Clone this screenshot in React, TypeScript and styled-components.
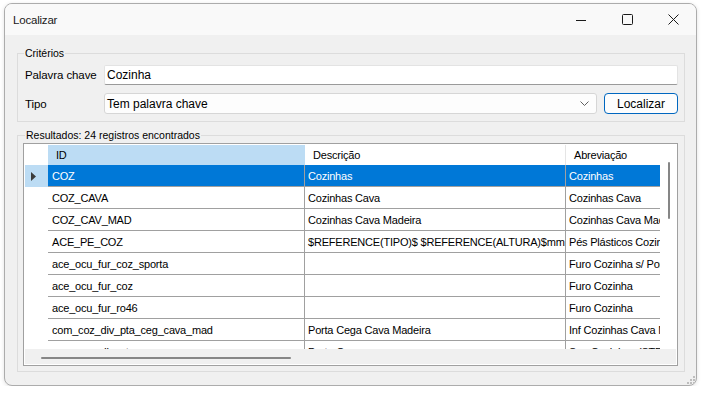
import React from "react";
import styled, { createGlobalStyle } from "styled-components";

const GlobalStyle = createGlobalStyle`
  body {
    margin: 0;
    background: #ffffff;
    font-family: "Liberation Sans", Arial, sans-serif;
  }
`;

const Window = styled.div`
  box-sizing: border-box;
  position: relative;
  width: 693px;
  height: 383px;
  margin: 3px 0 0 4px;
  display: flex;
  flex-direction: column;
  background: #f0f0f0;
  border: 1px solid #acacac;
  border-radius: 8px;
  overflow: hidden;
  box-shadow: 0 1px 4px rgba(0, 0, 0, 0.12);
`;

const TitleBar = styled.div`
  flex: none;
  height: 31px;
  display: flex;
  align-items: center;
  background: #f9f9f9;
`;

const Title = styled.span`
  flex: 1;
  padding-left: 8px;
  font-size: 11.5px;
  letter-spacing: -0.2px;
  color: #1a1a1a;
`;

const CaptionButton = styled.div`
  width: 46px;
  height: 31px;
  display: flex;
  align-items: center;
  justify-content: center;
`;

const Body = styled.div`
  flex: 1;
  min-height: 0;
  display: flex;
  flex-direction: column;
  gap: 6px;
  padding: 11px 11px 13px 12px;
`;

const Group = styled.fieldset<{ $pad: string; $grow?: boolean }>`
  margin: 0;
  min-width: 0;
  min-height: 0;
  padding: ${(p) => p.$pad};
  border: 1px solid #dcdcdc;
  flex: ${(p) => (p.$grow ? "1" : "none")};
  display: flex;
  flex-direction: column;
`;

const Legend = styled.legend<{ $shift: number }>`
  padding: 0 1px;
  margin-left: ${(p) => p.$shift}px;
  font-size: 10.5px;
  line-height: 14px;
  color: #000;
`;

const Form = styled.div`
  display: grid;
  grid-template-columns: 79px 1fr 81px;
  row-gap: 8px;
  align-items: center;
`;

const Label = styled.span`
  font-size: 11.5px;
  letter-spacing: -0.1px;
  color: #000;
`;

const TextBox = styled.div`
  grid-column: 2 / 4;
  box-sizing: border-box;
  height: 20px;
  display: flex;
  align-items: center;
  padding-left: 2px;
  background: #ffffff;
  border: 1px solid #e3e3e3;
  border-bottom-color: #9a9a9a;
  border-radius: 2px;
  font-size: 12px;
`;

const Combo = styled.div`
  box-sizing: border-box;
  height: 21px;
  display: flex;
  align-items: center;
  justify-content: space-between;
  padding: 0 7px 0 2px;
  background: #fdfdfd;
  border: 1px solid #d6d6d6;
  border-radius: 3px;
  font-size: 12px;
`;

const Button = styled.div`
  box-sizing: border-box;
  margin-left: 7px;
  height: 21px;
  display: flex;
  align-items: center;
  justify-content: center;
  background: #fdfdfd;
  border: 1px solid #0067c0;
  border-radius: 4px;
  font-size: 12px;
  color: #000;
`;

const Frame = styled.div`
  flex: 1;
  min-height: 0;
  display: grid;
  grid-template-columns: 1fr 16px;
  grid-template-rows: 1fr 15px;
  padding: 1px;
  background: #ffffff;
  border: 1px solid #a0a0a0;
`;

const Viewport = styled.div`
  overflow: hidden;
  min-width: 0;
`;

const VScroll = styled.div`
  background: #ffffff;
  padding: 17px 0 0 8px;
`;

const VThumb = styled.div`
  width: 2px;
  height: 57px;
  border-radius: 1px;
  background: #868686;
`;

const HScroll = styled.div`
  grid-column: 1 / 3;
  background: #f0f0f0;
  padding: 8px 0 0 16px;
`;

const HThumb = styled.div`
  width: 250px;
  height: 2px;
  border-radius: 1px;
  background: #868686;
`;

const Row = styled.div<{ $head?: boolean }>`
  display: flex;
  height: ${(p) => (p.$head ? "20px" : "22px")};
  width: max-content;
  font-size: 11px;
  letter-spacing: -0.2px;
`;

const RowHeader = styled.div<{ $sel?: boolean }>`
  flex: none;
  width: 23px;
  display: flex;
  align-items: center;
  padding-left: 6px;
  box-sizing: border-box;
  background: ${(p) => (p.$sel ? "#bcdcf4" : "#ffffff")};
`;

const HeadCell = styled.div<{ $w: number; $active?: boolean; $line?: boolean }>`
  flex: none;
  box-sizing: border-box;
  width: ${(p) => p.$w}px;
  display: flex;
  align-items: center;
  padding-left: 8px;
  background: ${(p) => (p.$active ? "#bcdcf4" : "#ffffff")};
  border-right: 1px solid ${(p) => (p.$line ? "#e5e5e5" : "transparent")};
  color: #000;
  white-space: nowrap;
  overflow: hidden;
`;

const Cell = styled.div<{ $w: number; $sel?: boolean; $first?: boolean }>`
  flex: none;
  box-sizing: border-box;
  width: ${(p) => p.$w}px;
  display: flex;
  align-items: center;
  padding-left: ${(p) => (p.$first ? 4 : 3)}px;
  border-right: 1px solid #a0a0a0;
  border-bottom: 1px solid #a0a0a0;
  background: ${(p) => (p.$sel ? "#0078d7" : "#ffffff")};
  color: ${(p) => (p.$sel ? "#ffffff" : "#000000")};
  white-space: nowrap;
  overflow: hidden;
`;

const Grip = styled.svg`
  position: absolute;
  right: 1px;
  bottom: 1px;
`;

const columns = [
  { title: "ID", width: 257 },
  { title: "Descrição", width: 261 },
  { title: "Abreviação", width: 160 },
];

const rows = [
  ["COZ", "Cozinhas", "Cozinhas"],
  ["COZ_CAVA", "Cozinhas Cava", "Cozinhas Cava"],
  ["COZ_CAV_MAD", "Cozinhas Cava Madeira", "Cozinhas Cava Madeira"],
  ["ACE_PE_COZ", "$REFERENCE(TIPO)$ $REFERENCE(ALTURA)$mm", "Pés Plásticos Cozinha"],
  ["ace_ocu_fur_coz_sporta", "", "Furo Cozinha s/ Porta"],
  ["ace_ocu_fur_coz", "", "Furo Cozinha"],
  ["ace_ocu_fur_ro46", "", "Furo Cozinha"],
  ["com_coz_div_pta_ceg_cava_mad", "Porta Cega Cava Madeira", "Inf Cozinhas Cava Madeira"],
  ["com_coz_div_pta_ceg", "Porta Cega", "Sup Cozinhas (STF)"],
];

export default function App() {
  return (
    <>
      <GlobalStyle />
      <Window>
        <TitleBar>
          <Title>Localizar</Title>
          <CaptionButton>
            <svg width="10" height="10" viewBox="0 0 10 10">
              <path d="M0 5.5h10" stroke="#1a1a1a" strokeWidth="1" />
            </svg>
          </CaptionButton>
          <CaptionButton>
            <svg width="11" height="11" viewBox="0 0 11 11">
              <rect x="0.5" y="0.5" width="10" height="10" rx="1" fill="none" stroke="#1a1a1a" />
            </svg>
          </CaptionButton>
          <CaptionButton>
            <svg width="11" height="11" viewBox="0 0 11 11">
              <path d="M0.5 0.5l10 10M10.5 0.5l-10 10" stroke="#1a1a1a" strokeWidth="1" />
            </svg>
          </CaptionButton>
        </TitleBar>
        <Body>
          <Group $pad="5px 6px 7px 7px">
            <Legend $shift={-1}>Critérios</Legend>
            <Form>
              <Label>Palavra chave</Label>
              <TextBox>Cozinha</TextBox>
              <Label>Tipo</Label>
              <Combo>
                Tem palavra chave
                <svg width="9" height="5" viewBox="0 0 9 5">
                  <path d="M0.5 0.5l4 4 4-4" fill="none" stroke="#606060" strokeWidth="1" />
                </svg>
              </Combo>
              <Button>Localizar</Button>
            </Form>
          </Group>
          <Group $pad="1px 6px 5px 5px" $grow>
            <Legend $shift={2}>Resultados: 24 registros encontrados</Legend>
            <Frame>
              <Viewport>
                <Row $head>
                  <RowHeader />
                  {columns.map((c, i) => (
                    <HeadCell key={c.title} $w={c.width} $active={i === 0} $line={i === 1}>
                      {c.title}
                    </HeadCell>
                  ))}
                </Row>
                {rows.map((r, ri) => (
                  <Row key={ri}>
                    <RowHeader $sel={ri === 0}>
                      {ri === 0 && (
                        <svg width="5" height="9" viewBox="0 0 5 9">
                          <path d="M0 0l5 4.5-5 4.5z" fill="#3c3c3c" />
                        </svg>
                      )}
                    </RowHeader>
                    {r.map((v, ci) => (
                      <Cell key={ci} $w={columns[ci].width} $sel={ri === 0} $first={ci === 0}>
                        {v}
                      </Cell>
                    ))}
                  </Row>
                ))}
              </Viewport>
              <VScroll>
                <VThumb />
              </VScroll>
              <HScroll>
                <HThumb />
              </HScroll>
            </Frame>
          </Group>
        </Body>
        <Grip width="9" height="9" viewBox="0 0 9 9">
          <g fill="#bdbdbd">
            <rect x="7" y="1" width="2" height="2" />
            <rect x="4" y="4" width="2" height="2" />
            <rect x="7" y="4" width="2" height="2" />
            <rect x="1" y="7" width="2" height="2" />
            <rect x="4" y="7" width="2" height="2" />
            <rect x="7" y="7" width="2" height="2" />
          </g>
        </Grip>
      </Window>
    </>
  );
}
